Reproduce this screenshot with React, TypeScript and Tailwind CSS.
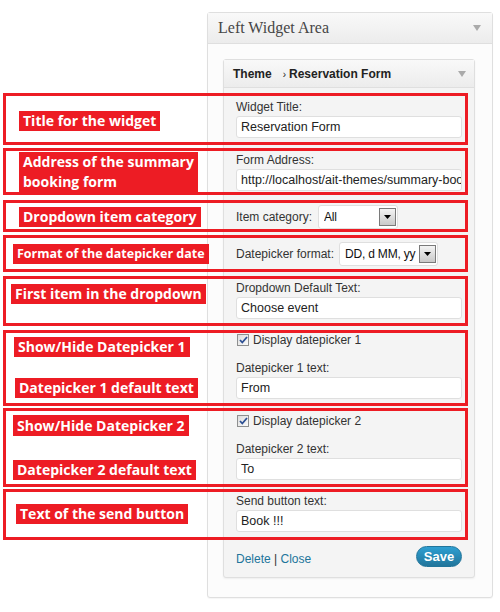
import React from "react";

const sans = { fontFamily: '"Liberation Sans", Arial, sans-serif' };

function Tri() {
  return (
    <svg width="8" height="6" viewBox="0 0 8 6">
      <path d="M0 0 L8 0 L4 6 Z" fill="#aaaaaa" />
    </svg>
  );
}

function Badge({ className, children }: { className: string; children: React.ReactNode }) {
  return (
    <div
      className={"bg-[#ed1c24] text-white font-bold whitespace-nowrap px-[4px] leading-[20px] " + className}
      style={{ fontFamily: '"Open Sans", "Noto Sans", sans-serif' }}
    >
      {children}
    </div>
  );
}

function Box({ className, children }: { className: string; children?: React.ReactNode }) {
  return (
    <div
      className={
        "absolute -left-[233px] -right-[6px] border-[3px] border-[#ed1c24] pointer-events-none flex flex-col items-start " +
        className
      }
    >
      {children}
    </div>
  );
}

function Label({ children }: { children: React.ReactNode }) {
  return <div className="text-[12px] leading-[17px] text-[#333]">{children}</div>;
}

function Input({ value }: { value: string }) {
  return (
    <div className="h-[22px] w-full bg-white border border-[#dfdfdf] rounded-[3px] pl-[4px] text-[12.5px] leading-[20px] text-[#222] overflow-hidden whitespace-nowrap">
      {value}
    </div>
  );
}

function Select({ value, className }: { value: string; className: string }) {
  return (
    <div
      className={
        "h-[24px] bg-white border border-[#dfdfdf] rounded-[3px] flex items-center pl-[5px] pr-[1px] " + className
      }
    >
      <div className="flex-1 overflow-hidden whitespace-nowrap text-[12px] tracking-[-0.2px] text-[#111]">{value}</div>
      <div className="w-[17px] h-[18px] border border-[#7a7a7a] bg-gradient-to-b from-[#f4f4f4] to-[#c9c9c9] flex items-center justify-center shrink-0">
        <svg width="7" height="4" viewBox="0 0 7 4">
          <path d="M0 0 L7 0 L3.5 4 Z" fill="#000" />
        </svg>
      </div>
    </div>
  );
}

function Check({ text }: { text: string }) {
  return (
    <div className="h-[16px] flex items-center">
      <div className="ml-[1px] w-[12px] h-[12px] border border-[#8e8f8f] bg-gradient-to-br from-[#dcdcdc] to-[#fbfbfb] flex items-center justify-center">
        <svg width="9" height="8" viewBox="0 0 9 8">
          <path d="M1 4 L3.3 6.5 L8 1" stroke="#2c4f93" strokeWidth="1.8" fill="none" />
        </svg>
      </div>
      <span className="ml-[4px] text-[12px] text-[#333]">{text}</span>
    </div>
  );
}

export default function App() {
  return (
    <div className="w-[500px] h-[612px] bg-white pt-[12px] overflow-hidden" style={sans}>
      <div className="ml-[207px] w-[286px] border border-[#dfdfdf] rounded-[3px] bg-[#fcfcfc] shadow-[0_1px_1px_rgba(0,0,0,0.04)]">
        <div className="h-[31px] border-b border-[#dfdfdf] bg-gradient-to-b from-[#f9f9f9] to-[#ececec] flex items-center pl-[10px] pr-[11px]">
          <span
            className="flex-1 text-[16px] text-[#464646]"
            style={{ fontFamily: '"Liberation Serif", "Times New Roman", serif' }}
          >
            Left Widget Area
          </span>
          <Tri />
        </div>
        <div className="pt-[15px] pl-[15px] pb-[19px]">
          <div className="w-[252px] border border-[#dfdfdf] rounded-[3px] bg-[#f4f4f4] shadow-[0_1px_2px_rgba(0,0,0,0.06)]">
            <div className="h-[28px] border-b border-[#dfdfdf] bg-gradient-to-b from-[#f9f9f9] to-[#ececec] flex items-center pl-[9px] pr-[8px]">
              <span className="flex-1 text-[12px] font-bold text-[#222]">
                Theme<span className="ml-[11px] mr-[3px] font-normal text-[10px]">›</span>Reservation Form
              </span>
              <Tri />
            </div>
            <div className="px-[12px] pt-[11px] pb-[10px] flex flex-col">
              {/* 1 */}
              <div className="relative">
                <Label>Widget Title:</Label>
                <Input value="Reservation Form" />
                <Box className="-top-[6px] -bottom-[7px] pl-[13px] pt-[15px]">
                  <Badge className="text-[14px]">Title for the widget</Badge>
                </Box>
              </div>
              {/* 2 */}
              <div className="relative mt-[14px]">
                <Label>Form Address:</Label>
                <Input value="http://localhost/ait-themes/summary-booking-form/" />
                <Box className="-top-[4px] -bottom-[4px] pl-[13px] pt-[1px]">
                  <Badge className="text-[14px]">
                    Address of the summary
                    <br />
                    booking form
                  </Badge>
                </Box>
              </div>
              {/* 3 */}
              <div className="relative mt-[14px] h-[24px] flex items-center">
                <span className="text-[12px] text-[#333]">Item category:</span>
                <Select value="All" className="ml-[6px] w-[80px]" />
                <Box className="-top-[5px] -bottom-[3px] pl-[13px] pt-[4px]">
                  <Badge className="text-[14px]">Dropdown item category</Badge>
                </Box>
              </div>
              {/* 4 */}
              <div className="relative mt-[13px] h-[24px] flex items-center">
                <span className="text-[12px] text-[#333]">Datepicker format:</span>
                <Select value="DD, d MM, yy" className="ml-[5px] w-[99px]" />
                <Box className="-top-[7px] -bottom-[6px] pl-[7px] pt-[6px]">
                  <Badge className="text-[12.5px] leading-[19px]">Format of the datepicker date</Badge>
                </Box>
              </div>
              {/* 5 */}
              <div className="relative mt-[14px]">
                <Label>Dropdown Default Text:</Label>
                <Input value="Choose event" />
                <Box className="-top-[4px] -bottom-[7px] pl-[5px] pt-[5px]">
                  <Badge className="text-[14px] leading-[18px]">First item in the dropdown</Badge>
                </Box>
              </div>
              {/* 6 */}
              <div className="relative mt-[13px]">
                <Check text="Display datepicker 1" />
                <div className="mt-[12px]">
                  <Label>Datepicker 1 text:</Label>
                </div>
                <Input value="From" />
                <Box className="-top-[2px] -bottom-[7px] pl-[8px] pt-[4px]">
                  <Badge className="text-[14px]">Show/Hide Datepicker 1</Badge>
                  <Badge className="text-[14px] mt-[21px] ml-[1px]">Datepicker 1 default text</Badge>
                </Box>
              </div>
              {/* 7 */}
              <div className="relative mt-[14px]">
                <Check text="Display datepicker 2" />
                <div className="mt-[12px]">
                  <Label>Datepicker 2 text:</Label>
                </div>
                <Input value="To" />
                <Box className="-top-[5px] -bottom-[7px] pl-[7px] pt-[4px]">
                  <Badge className="text-[14px] leading-[21px]">Show/Hide Datepicker 2</Badge>
                  <Badge className="text-[14px] mt-[24px]">Datepicker 2 default text</Badge>
                </Box>
              </div>
              {/* 8 */}
              <div className="relative mt-[13px]">
                <Label>Send button text:</Label>
                <Input value="Book !!!" />
                <Box className="-top-[4px] -bottom-[8px] pl-[10px] pt-[12px]">
                  <Badge className="text-[14px] leading-[19px]">Text of the send button</Badge>
                </Box>
              </div>
              {/* footer */}
              <div className="mt-[14px] h-[21px] flex items-center justify-between">
                <div className="text-[12px] pt-[4px]">
                  <span className="text-[#21759b]">Delete</span>
                  <span className="text-[#333]"> | </span>
                  <span className="text-[#21759b]">Close</span>
                </div>
                <div className="h-[21px] w-[46px] rounded-full bg-gradient-to-b from-[#2e9fd2] to-[#21759b] border border-[#21759b] text-white font-bold text-[13px] flex items-center justify-center">
                  Save
                </div>
              </div>
            </div>
          </div>
        </div>
      </div>
    </div>
  );
}
